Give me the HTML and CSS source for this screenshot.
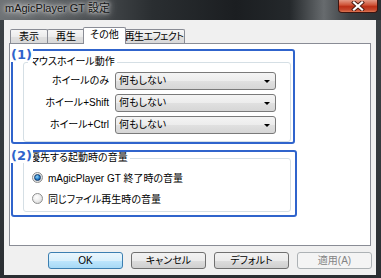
FILE: index.html
```html
<!DOCTYPE html>
<html lang="ja">
<head>
    <meta charset="UTF-8">
    <title>mAgicPlayer GT 設定</title>
    <link rel="stylesheet" href="styles.css">
</head>
<body>
    <div class="window">
        <div class="titlebar">
            <span class="title">mAgicPlayer GT 設定</span>
            <div class="close-button">
                <svg width="14" height="10" viewBox="0 0 14 10">
                    <path d="M3 1.5 L11 8.5 M11 1.5 L3 8.5" stroke="#4a1a12" stroke-width="4" stroke-linecap="square"/>
                    <path d="M3 1.5 L11 8.5 M11 1.5 L3 8.5" stroke="#ffffff" stroke-width="2.2" stroke-linecap="square"/>
                </svg>
            </div>
        </div>

        <div class="client">
            <div class="tabs">
                <div class="tab tab-show">表示</div>
                <div class="tab tab-play">再生</div>
                <div class="tab tab-other active">その他</div>
                <div class="tab tab-effect">再生エフェクト</div>
            </div>

            <div class="panel">
                <!-- (1) マウスホイール -->
                <div class="mark mark-wheel">
                    <span class="mark-num">(1)</span>
                    <fieldset class="group group-wheel">
                        <legend>マウスホイール動作</legend>
                        <div class="wheel-grid">
                            <span class="wheel-label">ホイールのみ</span>
                            <div class="combo">何もしない<span class="combo-arrow"></span></div>
                            <span class="wheel-label">ホイール+Shift</span>
                            <div class="combo">何もしない<span class="combo-arrow"></span></div>
                            <span class="wheel-label">ホイール+Ctrl</span>
                            <div class="combo">何もしない<span class="combo-arrow"></span></div>
                        </div>
                    </fieldset>
                </div>

                <!-- (2) 起動時の音量 -->
                <div class="mark mark-volume">
                    <span class="mark-num">(2)</span>
                    <fieldset class="group group-volume">
                        <legend>優先する起動時の音量</legend>
                        <div class="radio-list">
                            <div class="radio-row">
                                <span class="radio checked"></span>
                                <span>mAgicPlayer GT 終了時の音量</span>
                            </div>
                            <div class="radio-row">
                                <span class="radio"></span>
                                <span>同じファイル再生時の音量</span>
                            </div>
                        </div>
                    </fieldset>
                </div>
            </div>

            <div class="buttons">
                <div class="button default-button">OK</div>
                <div class="button">キャンセル</div>
                <div class="button">デフォルト</div>
                <div class="button disabled">適用(A)</div>
            </div>
        </div>
    </div>
</body>
</html>
```

FILE: styles.css
```css
body {
    margin: 0;
    background: #2b2f33;
    font-family: "Liberation Sans", "Noto Sans CJK JP", sans-serif;
    font-size: 10px;
    font-feature-settings: "palt";
    color: #000;
}

.window {
    width: 381px;
    height: 278px;
    display: flex;
    flex-direction: column;
    background: linear-gradient(180deg, #3d4246 0%, #34393d 60%, #2a2e32 100%);
    overflow: hidden;
}

/* заголовок окна */
.titlebar {
    height: 20px;
    display: flex;
    align-items: flex-start;
    padding-left: 5px;
    background: linear-gradient(90deg, #6e7275 0%, #55595c 18%, #2a2e31 40%, #1b1e21 62%, #24282b 76%, #676b6e 85%, #3a3e41 92%, #2c3033 100%);
}
.title {
    font-size: 11px;
    line-height: 16px;
    color: #141414;
    text-shadow: 0 0 6px #d8d8d8, 0 0 10px #cfcfcf, 0 0 3px #e6e6e6;
}
.close-button {
    margin-left: auto;
    margin-right: 3px;
    width: 40px;
    height: 13px;
    box-sizing: border-box;
    border: 1px solid #3d1510;
    border-top: none;
    border-radius: 0 0 4px 4px;
    background: linear-gradient(180deg, #e39a86 0%, #d0563b 40%, #bb2f16 55%, #c4442a 80%, #dc7652 100%);
    display: flex;
    justify-content: center;
    align-items: center;
}
.close-button svg {
    display: block;
}

.client {
    flex: 1;
    margin: 0 5px 3px 4px;
    background: #f0f0f0;
    display: flex;
    flex-direction: column;
}

/* вкладки */
.tabs {
    height: 16px;
    margin-top: 7px;
    padding-left: 6px;
    display: flex;
    align-items: flex-end;
}
.tab {
    height: 14px;
    box-sizing: border-box;
    border: 1px solid #898c95;
    border-bottom: none;
    border-radius: 2px 2px 0 0;
    line-height: 13px;
    text-align: center;
    white-space: nowrap;
    background: linear-gradient(180deg, #f6f6f6 0%, #ececec 50%, #e0e0e0 51%, #d9d9d9 100%);
    margin-left: -1px;
}
.tab-show { width: 38px; margin-left: 0; }
.tab-play { width: 38px; }
.tab-other { width: 43px; }
.tab-effect { width: 62px; letter-spacing: -0.6px; }
.tab.active {
    height: 17px;
    margin: 0 -2px -1px -2px;
    background: #fff;
    line-height: 14px;
    padding-bottom: 2px;
    position: relative;
    z-index: 1;
}

.panel {
    margin-left: 5px;
    width: 362px;
    height: 203px;
    box-sizing: border-box;
    border: 1px solid #898c95;
    background: #fff;
    display: flex;
    flex-direction: column;
}

/* синие пометки */
.mark {
    position: relative;
    margin-left: 1px;
    box-sizing: border-box;
    border: 2px solid #3064cc;
    border-radius: 3px;
    padding-left: 10px;
}
.mark-wheel {
    margin-top: 5px;
    width: 284px;
    height: 95px;
}
.mark-volume {
    margin-top: 6px;
    width: 286px;
    height: 67px;
}
.mark-num {
    position: absolute;
    left: -2px;
    top: -4px;
    background: #fff;
    color: #3064cc;
    font-family: "DejaVu Sans", sans-serif;
    font-weight: bold;
    font-size: 13px;
    line-height: 15px;
    padding-right: 1px;
}

.group {
    margin: 0;
    padding: 0;
    min-inline-size: 0;
    width: 268px;
    box-sizing: border-box;
    border: 1px solid #d5dfe5;
    border-radius: 3px;
}
.group legend {
    margin-left: 4px;
    padding: 0 2px;
    line-height: 12px;
}
.group-wheel {
    margin-top: 5px;
    height: 86px;
}
.group-volume {
    margin-top: 0;
    height: 60px;
}

.wheel-grid {
    display: grid;
    grid-template-columns: 85px 161px;
    column-gap: 6px;
    row-gap: 4px;
    padding-top: 4px;
}
.wheel-label {
    text-align: right;
    line-height: 18px;
}
.combo {
    height: 18px;
    box-sizing: border-box;
    border: 1px solid #7a7a7a;
    border-radius: 3px;
    background: linear-gradient(180deg, #f4f4f4 0%, #ececec 50%, #e0e0e0 51%, #d6d6d6 100%);
    padding-left: 3px;
    line-height: 16px;
    display: flex;
    align-items: center;
}
.combo-arrow {
    margin-left: auto;
    margin-right: 5px;
    width: 0;
    height: 0;
    border-left: 3px solid transparent;
    border-right: 3px solid transparent;
    border-top: 3px solid #000;
}

.radio-list {
    display: flex;
    flex-direction: column;
    gap: 7px;
    padding: 6px 0 0 8px;
}
.radio-row {
    display: flex;
    align-items: center;
    gap: 5px;
    height: 14px;
}
.radio {
    width: 11px;
    height: 11px;
    box-sizing: border-box;
    border-radius: 50%;
    border: 1px solid #8e8f8f;
    background: radial-gradient(circle at 40% 35%, #ffffff 0%, #eeeeee 45%, #cfcfcf 100%);
    display: flex;
    justify-content: center;
    align-items: center;
}
.radio.checked::after {
    content: "";
    width: 5px;
    height: 5px;
    border-radius: 50%;
    background: radial-gradient(circle at 40% 35%, #8fd3f5 0%, #1e78c8 60%, #0d3c7a 100%);
    border: 0.5px solid #123a68;
}

/* кнопки */
.buttons {
    margin-top: 6px;
    padding-right: 4px;
    display: flex;
    justify-content: flex-end;
    gap: 8px;
}
.button {
    width: 75px;
    height: 17px;
    box-sizing: border-box;
    border: 1px solid #707070;
    border-radius: 3px;
    background: linear-gradient(180deg, #f2f2f2 0%, #ebebeb 50%, #dddddd 51%, #cfcfcf 100%);
    text-align: center;
    line-height: 15px;
}
.default-button {
    border-color: #3c7fb1;
    background: linear-gradient(180deg, #eaf6fd 0%, #d9f0fc 50%, #bee6fd 51%, #a7d9f5 100%);
}
.button.disabled {
    border-color: #adb2b5;
    background: #f4f4f4;
    color: #838383;
}
```
